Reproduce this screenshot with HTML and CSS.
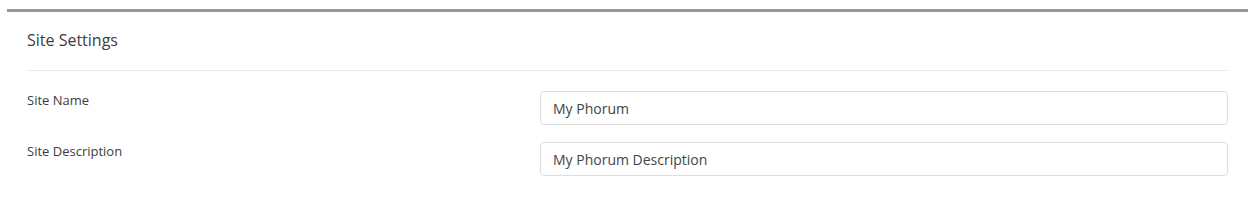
FILE: index.html
```html
<!DOCTYPE html>
<html lang="en">
<head>
  <meta charset="UTF-8">
  <title>Site Settings</title>
  <link rel="stylesheet" href="styles.css">
</head>
<body>
  <div class="panel">
    <h3 class="panel-title">Site Settings</h3>

    <form class="settings-form">
      <div class="form-row">
        <label for="siteName">Site Name</label>
        <input type="text" id="siteName" name="siteName" value="My Phorum">
      </div>
      <div class="form-row">
        <label for="siteDescription">Site Description</label>
        <input type="text" id="siteDescription" name="siteDescription" value="My Phorum Description">
      </div>
    </form>
  </div>
</body>
</html>
```

FILE: styles.css
```css
body {
  font-family: "Open Sans", "Liberation Sans", sans-serif;
  margin: 9px 8px 0 7px;
  background: #fff;
  color: #555;
}
.panel {
  border-top: 3px solid #999;
  padding: 0 20px;
}
.panel-title {
  margin: 0;
  padding: 17px 0 19px;
  font-size: 16px;
  line-height: 22px;
  font-weight: normal;
  color: #3d3d3d;
  border-bottom: 1px solid #eaeaea;
}
.settings-form {
  padding-top: 20px;
}
.form-row {
  display: grid;
  grid-template-columns: 483px 1fr;
  column-gap: 30px;
  align-items: start;
  margin-bottom: 17px;
}
label {
  font-size: 13px;
  line-height: 18px;
  font-weight: normal;
  color: #3d3d3d;
}
input {
  font-family: inherit;
  font-size: 14px;
  color: #444;
  height: 34px;
  box-sizing: border-box;
  padding: 6px 12px;
  border: 1px solid #ddd;
  border-radius: 4px;
  width: 100%;
  background: #fff;
}
```
